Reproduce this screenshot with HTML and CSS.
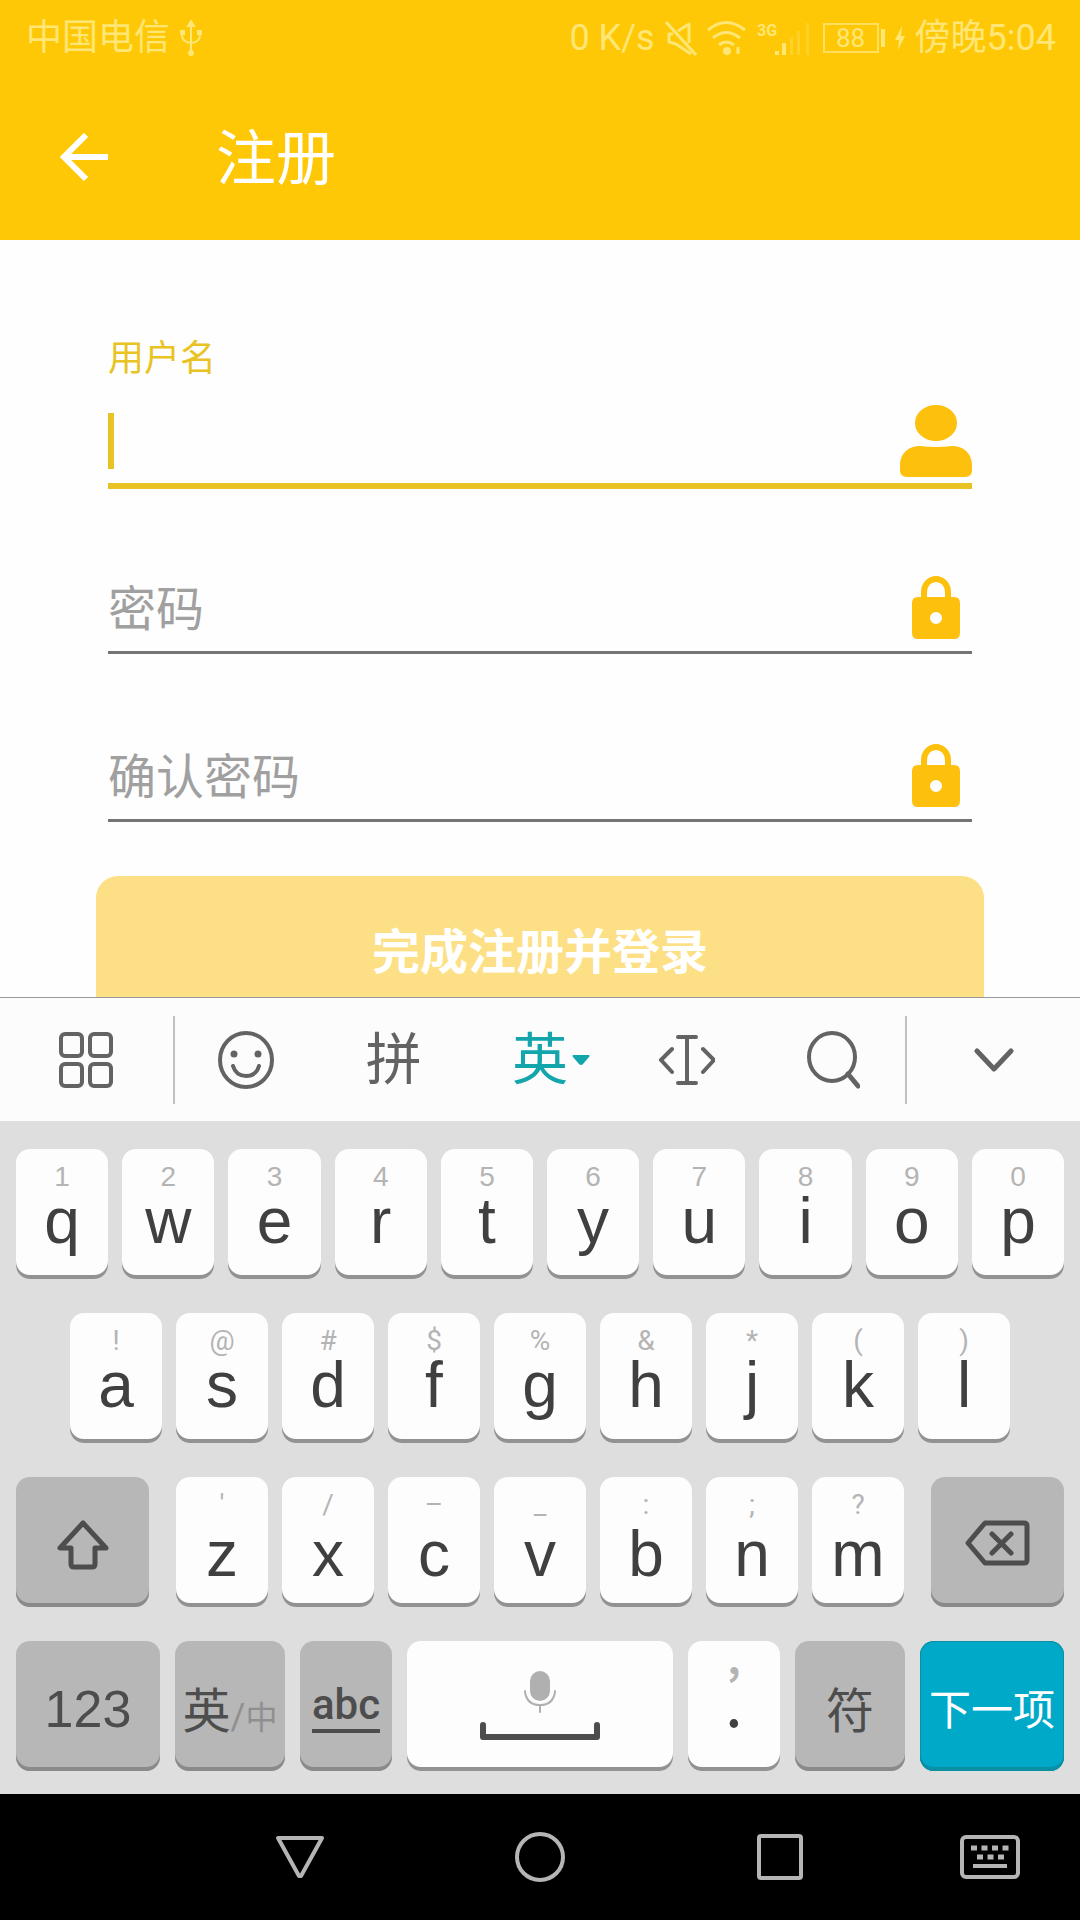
FILE: index.html
```html
<!DOCTYPE html>
<html lang="zh-CN">
<head>
<meta charset="utf-8">
<meta name="viewport" content="width=device-width, initial-scale=1">
<title>注册</title>
<link rel="stylesheet" href="styles.css">
</head>
<body>
<header class="header">
  <div class="status">
    <div class="status-group">
      <span>中国电信</span>
      <svg width="24" height="36" viewBox="0 0 24 36" fill="none" stroke="currentColor" stroke-width="2" aria-hidden="true"><path d="M11 4v29M2 12v3q0 7 9 8q9-1 9-8v-3"/><path d="M11 1l3 5H8z" fill="currentColor"/><circle cx="11" cy="33" r="2" fill="currentColor"/><path d="M1 11h3v3H1zM18 11h3v3h-3z" fill="currentColor"/></svg>
    </div>
    <div class="status-group">
      <span>0 K/s</span>
      <svg width="32" height="36" viewBox="0 0 32 36" fill="none" stroke="currentColor" stroke-width="3" aria-hidden="true"><path d="M1 2l30 33"/><path d="M13 11l11-7v19M8 14H4v8l7 2 15 10" stroke-linejoin="round"/></svg>
      <svg width="40" height="36" viewBox="0 0 40 36" fill="none" stroke="currentColor" stroke-width="3" aria-hidden="true"><path d="M1 10q18-15 37 0M6 18q13-11 27 0M12 25q7-6 15 0"/><circle cx="20" cy="31" r="4" fill="currentColor" stroke="none"/><path d="M31 27v7"/></svg>
      <svg width="56" height="36" viewBox="0 0 56 36" fill="currentColor" aria-hidden="true"><text x="0" y="16" class="signal-label">3G</text><path d="M18 31h4v4h-4zM25 23h4v12h-4z"/><path d="M33 17h3v18h-3zM40 11h3v24h-3zM49 3h3v32h-3z" opacity=".3"/></svg>
      <span class="battery"><span class="battery-box">88</span><span class="battery-tip"></span></span>
      <svg width="10" height="24" viewBox="0 0 10 24" fill="currentColor" aria-hidden="true"><path d="M7 0L0 14h4L3 24l7-14H6z"/></svg>
      <span>傍晚5:04</span>
    </div>
  </div>
  <div class="app-bar">
    <button class="back" type="button" aria-label="返回"><svg width="48" height="48" viewBox="0 0 48 48" fill="none" stroke="currentColor" stroke-width="6" aria-hidden="true"><path d="M26 2L4 24l22 22M4 24h44"/></svg></button>
    <h1 class="title">注册</h1>
  </div>
</header>

<main class="content">
  <form class="form">
    <div class="field field-active">
      <label class="field-label" for="username">用户名</label>
      <div class="field-row">
        <span class="caret"></span>
        <input class="input" id="username" type="text">
        <svg width="72" height="72" viewBox="0 0 72 72" fill="currentColor" aria-hidden="true"><ellipse cx="36" cy="18" rx="21" ry="18"/><path d="M0 60C0 48 9 41 20 41q16 2 32 0c11 0 20 7 20 19v5q0 7-7 7H7q-7 0-7-7z"/></svg>
      </div>
    </div>
    <div class="field">
      <div class="field-row">
        <input class="input" type="password" placeholder="密码" aria-label="密码">
        <svg width="72" height="72" viewBox="0 0 72 72" aria-hidden="true"><path d="M24 29V19a12 13 0 0 1 24 0v10" fill="none" stroke="currentColor" stroke-width="6"/><path fill="currentColor" fill-rule="evenodd" d="M18 24h36q6 0 6 6v30q0 6-6 6H18q-6 0-6-6V30q0-6 6-6zM36 39a6 6 0 1 0 0 12a6 6 0 1 0 0-12z"/></svg>
      </div>
    </div>
    <div class="field">
      <div class="field-row">
        <input class="input" type="password" placeholder="确认密码" aria-label="确认密码">
        <svg width="72" height="72" viewBox="0 0 72 72" aria-hidden="true"><path d="M24 29V19a12 13 0 0 1 24 0v10" fill="none" stroke="currentColor" stroke-width="6"/><path fill="currentColor" fill-rule="evenodd" d="M18 24h36q6 0 6 6v30q0 6-6 6H18q-6 0-6-6V30q0-6 6-6zM36 39a6 6 0 1 0 0 12a6 6 0 1 0 0-12z"/></svg>
      </div>
    </div>
    <button class="submit" type="button">完成注册并登录</button>
  </form>
</main>

<section class="keyboard" aria-label="键盘">
  <div class="tools">
    <button class="tool tool-side" type="button" aria-label="菜单"><svg width="54" height="56" viewBox="0 0 54 56" fill="none" stroke="currentColor" stroke-width="4" aria-hidden="true"><rect x="2" y="2" width="21" height="22" rx="4"/><rect x="31" y="2" width="21" height="22" rx="4"/><rect x="2" y="32" width="21" height="22" rx="4"/><rect x="31" y="32" width="21" height="22" rx="4"/></svg></button>
    <span class="divider"></span>
    <div class="tools-main">
      <button class="tool" type="button" aria-label="表情"><svg width="60" height="58" viewBox="0 0 60 58" fill="none" stroke="currentColor" stroke-width="4" stroke-linecap="round" aria-hidden="true"><ellipse cx="28" cy="29" rx="26" ry="27"/><circle cx="16" cy="23" r="3.500" fill="currentColor" stroke="none"/><circle cx="40" cy="23" r="3.500" fill="currentColor" stroke="none"/><path d="M15 35q3 10 13 10t13-10"/></svg></button>
      <button class="tool" type="button">拼</button>
      <button class="tool tool-active" type="button">英<svg width="18" height="10" viewBox="0 0 18 10" fill="currentColor" aria-hidden="true"><path d="M1 0h16q1 1 0 2l-6 7q-2 2-4 0L1 2q-1-1 0-2z"/></svg></button>
      <button class="tool" type="button" aria-label="移动光标"><svg width="58" height="52" viewBox="-2 0 58 52" fill="none" stroke="currentColor" stroke-width="4" stroke-linecap="round" stroke-linejoin="round" aria-hidden="true"><path d="M19 3h18M19 49h18M28 3v46M13 15L2 26l11 12M44 15l11 11-11 12"/></svg></button>
      <button class="tool" type="button" aria-label="搜索"><svg width="56" height="58" viewBox="0 0 56 58" fill="none" stroke="currentColor" stroke-width="4" stroke-linecap="round" aria-hidden="true"><ellipse cx="28" cy="26" rx="23" ry="24"/><path d="M44 43l10 12" stroke-width="5"/></svg></button>
    </div>
    <span class="divider"></span>
    <button class="tool tool-side" type="button" aria-label="收起键盘"><svg width="40" height="24" viewBox="0 0 40 24" fill="none" stroke="currentColor" stroke-width="5" stroke-linecap="round" stroke-linejoin="round" aria-hidden="true"><path d="M3 3l17 18L37 3"/></svg></button>
  </div>
  <div class="keys">
    <div class="key-row">
      <button class="key" type="button"><span class="hint">1</span><span class="glyph">q</span></button>
      <button class="key" type="button"><span class="hint">2</span><span class="glyph">w</span></button>
      <button class="key" type="button"><span class="hint">3</span><span class="glyph">e</span></button>
      <button class="key" type="button"><span class="hint">4</span><span class="glyph">r</span></button>
      <button class="key" type="button"><span class="hint">5</span><span class="glyph">t</span></button>
      <button class="key" type="button"><span class="hint">6</span><span class="glyph">y</span></button>
      <button class="key" type="button"><span class="hint">7</span><span class="glyph">u</span></button>
      <button class="key" type="button"><span class="hint">8</span><span class="glyph">i</span></button>
      <button class="key" type="button"><span class="hint">9</span><span class="glyph">o</span></button>
      <button class="key" type="button"><span class="hint">0</span><span class="glyph">p</span></button>
    </div>
    <div class="key-row row-home row-symbols">
      <button class="key" type="button"><span class="hint">!</span><span class="glyph">a</span></button>
      <button class="key" type="button"><span class="hint">@</span><span class="glyph">s</span></button>
      <button class="key" type="button"><span class="hint">#</span><span class="glyph">d</span></button>
      <button class="key" type="button"><span class="hint">$</span><span class="glyph">f</span></button>
      <button class="key" type="button"><span class="hint">%</span><span class="glyph">g</span></button>
      <button class="key" type="button"><span class="hint">&amp;</span><span class="glyph">h</span></button>
      <button class="key" type="button"><span class="hint">*</span><span class="glyph">j</span></button>
      <button class="key" type="button"><span class="hint">(</span><span class="glyph">k</span></button>
      <button class="key" type="button"><span class="hint">)</span><span class="glyph">l</span></button>
    </div>
    <div class="key-row row-lower row-symbols">
      <button class="key key-dark key-shift" type="button" aria-label="大写"><svg width="52" height="50" viewBox="0 0 52 50" fill="none" stroke="currentColor" stroke-width="5" stroke-linejoin="round" aria-hidden="true"><path d="M26 3L3 28h11v16q0 3 3 3h18q3 0 3-3V28h11z"/></svg></button>
      <button class="key" type="button"><span class="hint">′</span><span class="glyph">z</span></button>
      <button class="key" type="button"><span class="hint">/</span><span class="glyph">x</span></button>
      <button class="key" type="button"><span class="hint">–</span><span class="glyph">c</span></button>
      <button class="key" type="button"><span class="hint">_</span><span class="glyph">v</span></button>
      <button class="key" type="button"><span class="hint">:</span><span class="glyph">b</span></button>
      <button class="key" type="button"><span class="hint">;</span><span class="glyph">n</span></button>
      <button class="key" type="button"><span class="hint">?</span><span class="glyph">m</span></button>
      <button class="key key-dark key-delete" type="button" aria-label="删除"><svg width="66" height="46" viewBox="0 0 66 46" fill="none" stroke="currentColor" stroke-width="5" stroke-linejoin="round" stroke-linecap="round" aria-hidden="true"><path d="M20 3h39q3 0 3 3v34q0 3-3 3H20L3 23zM27 14l19 19M46 14L27 33"/></svg></button>
    </div>
    <div class="key-row row-bottom row-symbols">
      <button class="key key-dark key-wide key-numbers" type="button">123</button>
      <button class="key key-dark key-medium key-lang" type="button"><span>英</span><span class="lang-alt"><span class="lang-slash">/</span>中</span></button>
      <button class="key key-dark key-abc" type="button"><span class="abc">abc</span></button>
      <button class="key key-space" type="button" aria-label="空格"><svg width="120" height="72" viewBox="0 0 120 72" fill="none" aria-hidden="true"><rect x="50" y="0" width="20" height="30" rx="10" fill="#b0b0b0"/><path d="M45 20v1q2 13 15 13t15-13v-1M60 34v7" stroke="#b0b0b0" stroke-width="2" stroke-linecap="round"/><path d="M3 54v12h114V54" stroke="#4d4d4d" stroke-width="6" stroke-linecap="round" stroke-linejoin="round"/></svg></button>
      <button class="key key-period" type="button"><span class="hint">,</span><span class="glyph">.</span></button>
      <button class="key key-dark key-medium" type="button">符</button>
      <button class="key key-wide key-next" type="button">下一项</button>
    </div>
  </div>
</section>

<nav class="nav" aria-label="系统导航">
  <button class="nav-button" type="button" aria-label="返回"><svg width="50" height="44" viewBox="0 0 50 44" fill="none" stroke="currentColor" stroke-width="4" stroke-linejoin="round" aria-hidden="true"><path d="M3 3h44L26 41h-2z"/></svg></button>
  <button class="nav-button" type="button" aria-label="主页"><svg width="50" height="50" viewBox="0 0 50 50" fill="none" stroke="currentColor" stroke-width="4" aria-hidden="true"><circle cx="25" cy="25" r="23"/></svg></button>
  <button class="nav-button" type="button" aria-label="最近任务"><svg width="46" height="46" viewBox="0 0 46 46" fill="none" stroke="currentColor" stroke-width="4" aria-hidden="true"><rect x="2" y="2" width="42" height="42" rx="2"/></svg></button>
  <button class="nav-button" type="button" aria-label="切换输入法"><svg width="60" height="44" viewBox="0 0 60 44" fill="none" stroke="currentColor" stroke-width="4" aria-hidden="true"><rect x="2" y="2" width="56" height="40" rx="4"/><path d="M11 13h38" stroke-width="5" stroke-dasharray="6 4.500"/><path d="M17 22h27" stroke-width="5" stroke-dasharray="6 4.500"/><path d="M13 31h34"/></svg></button>
</nav>
</body>
</html>
```
FILE: styles.css
```css
* { box-sizing: border-box; }

body {
  margin: 0;
  height: 100vh;
  display: flex;
  flex-direction: column;
  background: #fefefe;
  font-family: Roboto, "Noto Sans CJK SC", sans-serif;
}

button, input {
  margin: 0;
  padding: 0;
  border: 0;
  background: none;
  color: inherit;
  font: inherit;
}

svg { display: block; flex: none; }

/* Header */
.header { background: #ffc807; color: #fff; }

.status {
  height: 74px;
  padding: 2px 24px 0 26px;
  display: flex;
  align-items: center;
  justify-content: space-between;
  color: #ffe675;
  font-size: 36px;
  line-height: 40px;
}

.status-group { display: flex; align-items: center; gap: 10px; }
.signal-label { font: 700 16px Roboto, sans-serif; }
.battery { display: flex; align-items: center; gap: 2px; }
.battery-box {
  width: 56px;
  height: 30px;
  border: 2px solid #ffdf5c;
  font-size: 26px;
  line-height: 26px;
  text-align: center;
}
.battery-tip { width: 4px; height: 18px; background: currentColor; }

.app-bar {
  height: 166px;
  padding-left: 60px;
  display: flex;
  align-items: center;
  gap: 108px;
}
.title { margin: 0; padding-top: 6px; font-size: 60px; font-weight: 400; line-height: 72px; }

/* Form */
.content { flex: 1 1 0; min-height: 0; overflow: hidden; padding: 78px 96px 0; }
.form { display: flex; flex-direction: column; }

.field {
  height: 168px;
  margin: 0 12px;
  border-bottom: 3px solid #757575;
  display: flex;
  flex-direction: column;
  justify-content: flex-end;
}
.field-active { height: 171px; margin-bottom: -3px; border-bottom: 6px solid #e9c323; }
.field-label { color: #e9c323; font-size: 36px; line-height: 48px; margin-bottom: 16px; }
.field-row { height: 84px; display: flex; align-items: center; color: #fdc00d; }
.caret { width: 6px; height: 56px; background: #e9c323; }
.input {
  flex: 1;
  min-width: 0;
  height: 72px;
  outline: none;
  color: #333;
  font-size: 48px;
}
.input::placeholder { color: #a0a0a0; opacity: 1; }

.submit {
  height: 144px;
  margin-top: 54px;
  border-radius: 22px;
  background: #fde085;
  color: #fff;
  font-size: 48px;
  font-weight: 700;
}

/* Keyboard */
.keyboard { border-top: 1px solid #999; background: #dedede; }

.tools {
  height: 123px;
  display: flex;
  align-items: center;
  background: #fdfcfd;
  color: #636363;
}
.tools-main { flex: 733; display: grid; grid-template-columns: repeat(5, 1fr); align-items: center; }
.tool { height: 88px; display: flex; align-items: center; justify-content: center; font-size: 56px; line-height: 64px; }
.tool-side { flex: 173; }
.tool-active { gap: 4px; padding-left: 22px; color: #12a5ac; }
.divider { width: 2px; height: 88px; background: #c0c0c0; }

.keys { padding: 28px 16px 23px; display: grid; gap: 34px; }
.key-row { display: flex; gap: 14px; }
.row-home { padding: 0 54px; }
.row-bottom { gap: 15px; }

.key {
  flex: 92 1 0;
  min-width: 0;
  height: 130px;
  padding-top: 14px;
  border-radius: 14px;
  background: #fdfdfd;
  box-shadow: inset 0 -4px #929292;
  color: #404040;
  display: flex;
  flex-direction: column;
  align-items: center;
}
.hint { color: #b4b4b4; font: 28px/28px "Liberation Sans", sans-serif; }
.row-symbols .hint { font-family: Roboto, sans-serif; }
.glyph { font: 64px/60px "Liberation Sans", sans-serif; }
.row-lower .glyph { padding-top: 5px; }

.key-dark, .key-space, .key-next {
  padding: 2px 0 0;
  justify-content: center;
  font-size: 48px;
}
.key-dark { background: #b7b7b7; box-shadow: inset 0 -4px #8a8a8a; color: #4d4d4d; }
.key-shift, .key-delete { flex-grow: 133; padding-top: 6px; }
.key-shift { margin-right: 13px; }
.key-delete { margin-left: 13px; padding-top: 2px; }
.key-wide { flex-grow: 144; }
.key-medium { flex-grow: 110; }
.key-space { flex-grow: 266; }
.key-numbers { padding-top: 6px; font-family: "Liberation Sans", sans-serif; font-size: 52px; }
.key-lang { flex-direction: row; align-items: center; }
.lang-alt { padding-top: 16px; color: #8f8f8f; font-size: 32px; }
.lang-slash { font-size: 36px; }
.abc { border-bottom: 4px solid #4d4d4d; font-size: 42px; font-weight: 500; line-height: 48px; }
.key-period { padding-top: 0; }
.key-period .hint { font: 700 40px/32px "Noto Sans CJK SC", sans-serif; }
.key-period .glyph { font: 64px/52px "Noto Sans CJK SC", sans-serif; }
.key-next {
  padding-top: 0;
  background: #00a9c7;
  box-shadow: inset 0 -4px #0b8fa3, inset 0 0 0 1px #0b8fa3;
  color: #fff;
  font-size: 42px;
  white-space: nowrap;
}

/* System navigation */
.nav {
  height: 126px;
  padding-left: calc(100% / 6);
  display: grid;
  grid-template-columns: 4fr 4fr 4fr 3fr;
  background: #000;
  color: #b5b5b5;
}
.nav-button { display: flex; align-items: center; justify-content: center; }
```
